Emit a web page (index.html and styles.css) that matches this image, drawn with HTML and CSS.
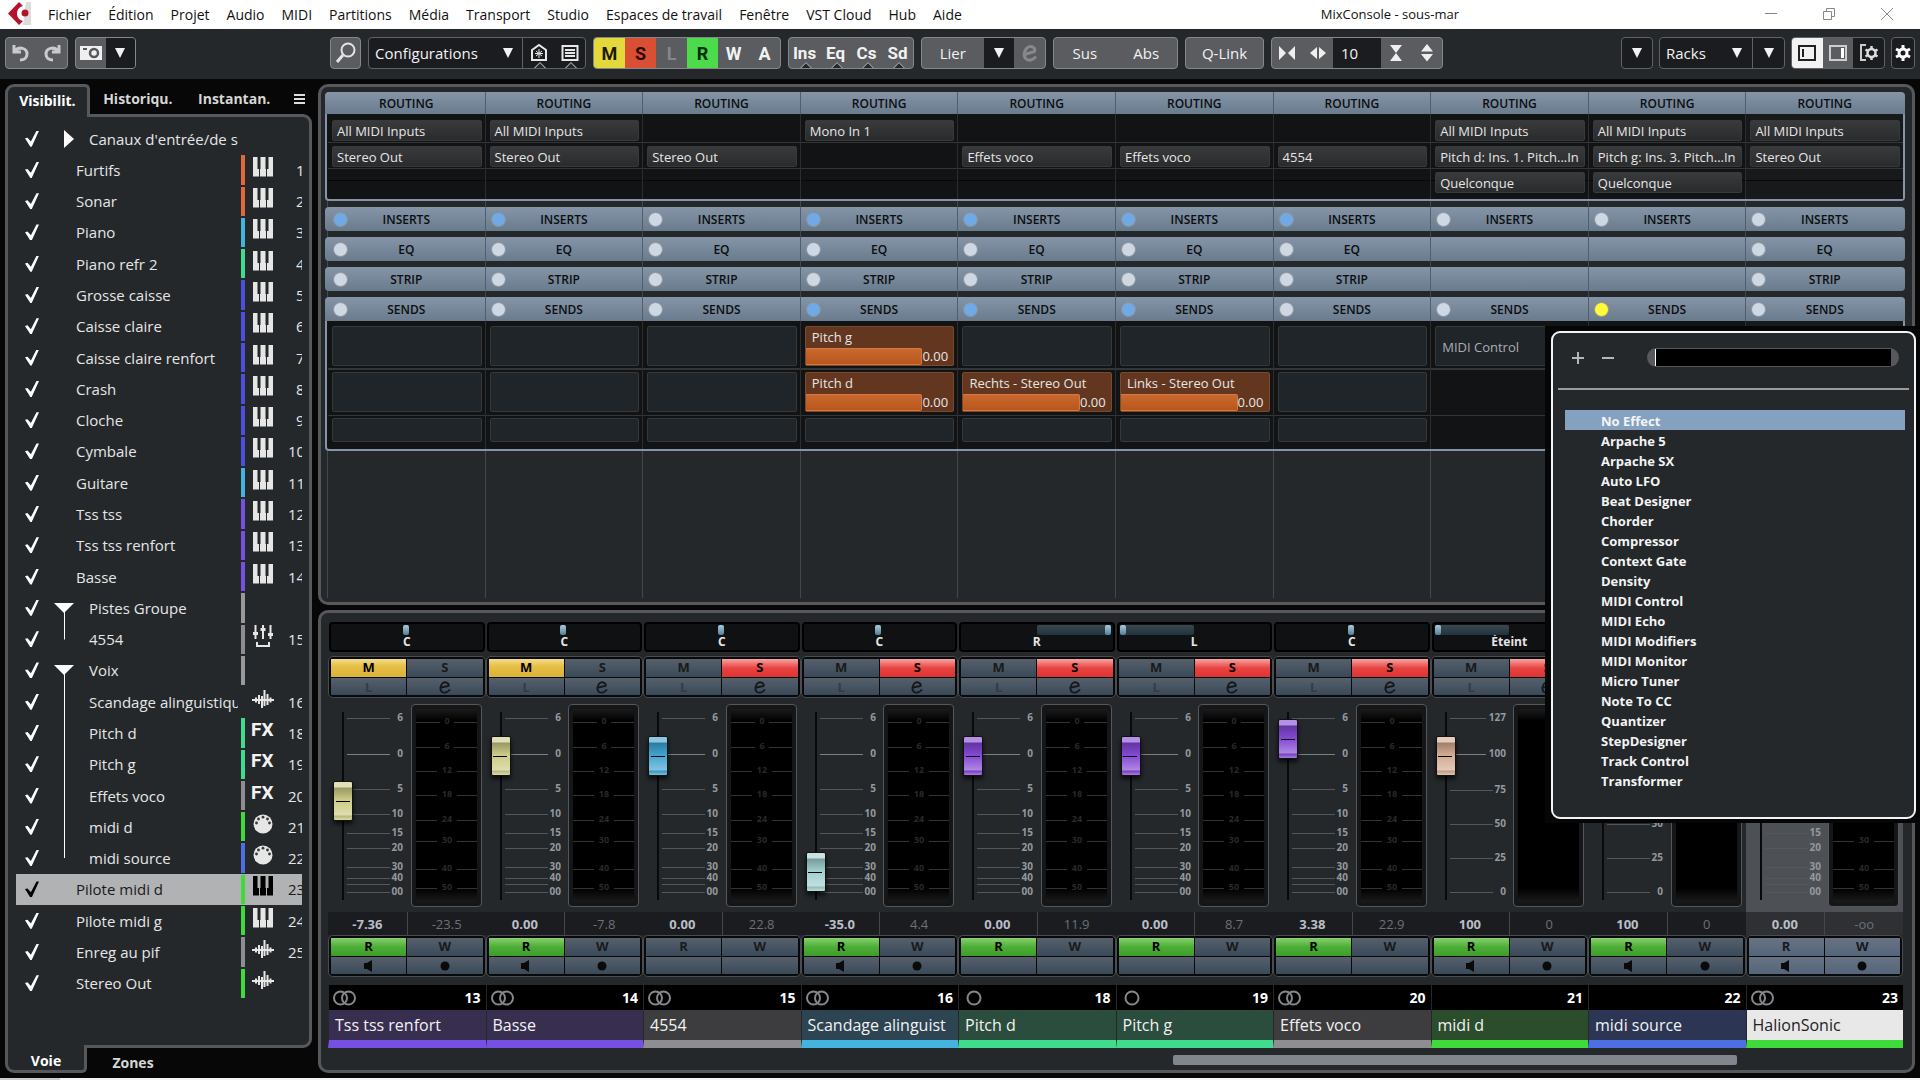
FILE: index.html
```html
<!DOCTYPE html>
<html lang="fr">
  <head>
    <meta charset="UTF-8" />
    <meta name="viewport" content="width=device-width, initial-scale=1.0" />
    <title>MixConsole - sous-mar</title>
    <link rel="stylesheet" href="styles.css">
  </head>
  <body>
    <header class="menubar">
      <svg class="logo" width="24" height="24" viewBox="0 0 24 24">
        <path d="M18 0h5v23h-8z" fill="#dcdcdc" />
        <path d="M0 11.5 11 0l4 4c-4 1-6 4-6 7.500s2 6.500 6 7.500l-4 4z" fill="#b3142a" />
        <circle cx="17" cy="11" r="3.500" fill="#b3142a" />
      </svg>
      <nav class="menu">
        <a href="#">Fichier</a>
        <a href="#">Édition</a>
        <a href="#">Projet</a>
        <a href="#">Audio</a>
        <a href="#">MIDI</a>
        <a href="#">Partitions</a>
        <a href="#">Média</a>
        <a href="#">Transport</a>
        <a href="#">Studio</a>
        <a href="#">Espaces de travail</a>
        <a href="#">Fenêtre</a>
        <a href="#">VST Cloud</a>
        <a href="#">Hub</a>
        <a href="#">Aide</a>
      </nav>
      <div class="window-title">MixConsole - sous-mar</div>
      <div class="window-buttons">
        <button aria-label="Réduire"><svg width="14" height="14"><path d="M1 6.500h12" /></svg></button>
        <button aria-label="Restaurer"><svg width="14" height="14"><path d="M1.500 4.500h8v8h-8zM4.500 4V1.500h8v8H10" /></svg></button>
        <button aria-label="Fermer"><svg width="14" height="14"><path d="M1 1l12 12M13 1 1 13" /></svg></button>
      </div>
    </header>

    <div class="toolbar">
      <div class="group undo">
        <button aria-label="Annuler"><svg width="20" height="20" viewBox="0 0 20 20"><path d="M3 2v7h7M4 8c4-5 12-3 12 3 0 4-3 6-7 6" fill="none" stroke="#c9cacc" stroke-width="3" /></svg></button>
        <button aria-label="Rétablir"><svg width="20" height="20" viewBox="0 0 20 20"><path d="M17 2v7h-7M16 8C12 3 4 5 4 11c0 4 3 6 7 6" fill="none" stroke="#c9cacc" stroke-width="3" /></svg></button>
      </div>
      <div class="group camera">
        <button aria-label="Instantané"><svg width="22" height="16" viewBox="0 0 22 16"><path d="M0 1h22v14H0z" fill="#efefef" /><circle cx="14" cy="8" r="4" fill="none" stroke="#55575a" stroke-width="2.500" /><path d="M3 4h4" stroke="#55575a" stroke-width="2" /></svg></button>
        <button class="dark" aria-label="Liste"><svg class="arrow" width="10" height="10"><path d="M0 0h10L5 10z" /></svg></button>
      </div>
      <button class="group search" aria-label="Rechercher"><svg width="24" height="24" viewBox="0 0 24 24"><circle cx="14" cy="9" r="6.500" fill="none" stroke="#e4e4e4" stroke-width="2" /><path d="M9 14l-6 7" stroke="#e4e4e4" stroke-width="3" /></svg></button>
      <div class="group dark config">
        <select aria-label="Configurations"><option>Configurations</option></select>
        <svg class="arrow" width="10" height="10"><path d="M0 0h10L5 10z" /></svg>
        <button class="notched first" aria-label="Zones"><svg width="18" height="18" viewBox="0 0 18 18"><path d="M2 6l7-5 7 5v10H2z" fill="none" stroke="#e8e8e8" stroke-width="2" /><path d="M9 5v9M5 9.500h8M6 7l6 5M12 7l-6 5" stroke="#e8e8e8" /></svg></button>
        <button class="notched" aria-label="Liste des voies"><svg width="18" height="18" viewBox="0 0 18 18"><path d="M1.500 2h15v14h-15z" fill="none" stroke="#e8e8e8" stroke-width="2" /><path d="M4 6h10M4 9h10M4 12h10" stroke="#e8e8e8" stroke-width="2" /></svg></button>
      </div>
      <div class="group modes">
        <button class="yellow">M</button>
        <button class="red">S</button>
        <button class="off">L</button>
        <button class="green">R</button>
        <button>W</button>
        <button>A</button>
      </div>
      <div class="group racks-toggle">
        <button class="notched">Ins</button>
        <button class="notched">Eq</button>
        <button class="notched">Cs</button>
        <button class="notched">Sd</button>
      </div>
      <div class="group link">
        <button class="wide">Lier</button>
        <button class="dark" aria-label="Options"><svg class="arrow" width="10" height="10"><path d="M0 0h10L5 10z" /></svg></button>
        <button aria-label="Modifier"><svg width="20" height="20" viewBox="0 0 20 20"><path d="M4.500 11.500l10-3c1.500-4-3-6-6-4.500-4 2-5.500 8-3 11.500 3 3 8 1.500 10.500-2" fill="none" stroke="#86888b" stroke-width="3" /></svg></button>
      </div>
      <div class="group pair">
        <button>Sus</button>
        <button>Abs</button>
      </div>
      <button class="group qlink">Q-Link</button>
      <div class="group zoom">
        <button aria-label="Rétrécir"><svg width="16" height="14"><path d="M0 0l7 7-7 7zM16 0 9 7l7 7z" fill="#efefef" /></svg></button>
        <button aria-label="Élargir"><svg width="16" height="14"><path d="M7 1v12L0 7zM9 1v12l7-6z" fill="#efefef" /></svg></button>
        <input type="text" value="10" aria-label="Nombre de voies" />
        <button aria-label="Réduire la hauteur"><svg width="12" height="18"><path d="M0 1h12L6 9l6 8H0l6-8z" fill="#efefef" /></svg></button>
        <button aria-label="Augmenter la hauteur"><svg width="12" height="18"><path d="M0 7.500 6 0l6 7.500zM0 10h12l-6 7.500z" fill="#efefef" /></svg></button>
      </div>
      <div class="toolbar-right">
        <button class="group dark menu-button" aria-label="Menu"><svg class="arrow" width="10" height="10"><path d="M0 0h10L5 10z" /></svg></button>
        <div class="group dark racks">
          <select aria-label="Racks"><option>Racks</option></select>
          <svg class="arrow" width="10" height="10"><path d="M0 0h10L5 10z" /></svg>
          <button class="first" aria-label="Menu des racks"><svg class="arrow" width="10" height="10"><path d="M0 0h10L5 10z" /></svg></button>
        </div>
        <div class="group dark layout">
          <button class="layout-on" aria-label="Zone gauche"><svg width="18" height="16"><path d="M1 1h16v14H1z" fill="none" stroke="#222" stroke-width="2" /><path d="M4 4h2v8H4z" fill="#222" /></svg></button>
          <button class="layout-off" aria-label="Zone droite"><svg width="18" height="16"><path d="M1 1h16v14H1z" fill="none" stroke="#ccc" stroke-width="2" /><path d="M12 3h3v10h-3z" fill="#fff" /></svg></button>
          <button aria-label="Réglages de la fenêtre"><svg width="20" height="18" viewBox="0 0 20 18"><path d="M7 1H2v15h5" fill="none" stroke="#ccc" stroke-width="2" /><circle cx="12.500" cy="9" r="4" fill="none" stroke="#ddd" stroke-width="2.500" /><path d="M12.500 2v3M12.500 13v3M6.500 5.500l2.500 1.500M16 11l2.500 1.500M6.500 12.500 9 11M16 7l2.500-1.500" stroke="#ddd" stroke-width="2.500" /></svg></button>
        </div>
        <button class="group dark gear" aria-label="Configuration"><svg width="18" height="18" viewBox="0 0 18 18"><circle cx="9" cy="9" r="4" fill="none" stroke="#fff" stroke-width="3" /><path d="M9 1v3M9 14v3M2 5l3 1.500M13 11.500l3 1.500M2 13l3-1.500M13 6.500 16 5" stroke="#fff" stroke-width="3" /></svg></button>
      </div>
    </div>

    <main class="workspace">
      <aside class="sidebar">
        <div class="tabs">
          <button class="tab active">Visibilit.</button>
          <button class="tab">Historiqu.</button>
          <button class="tab">Instantan.</button>
          <button class="tab-menu" aria-label="Onglets"><svg width="12" height="12"><path d="M0 2h11M0 6h11M0 10h11" stroke="#ddd" stroke-width="2" /></svg></button>
        </div>
        <div class="sidebar-body">
          <ul class="tracks"></ul>
        </div>
        <div class="tabs bottom">
          <button class="tab active">Voie</button>
          <button class="tab">Zones</button>
        </div>
      </aside>

      <div class="console">
        <section class="panel rack-panel">
          <div class="racks-area"></div>
        </section>
        <section class="panel fader-panel">
          <div class="channels"></div>
          <div class="scrollbar"><div class="scroll-thumb"></div></div>
        </section>
      </div>
    </main>
    <footer class="taskbar-edge"></footer>

    <div class="popup-frame">
      <div class="popup">
        <div class="popup-head">
          <button aria-label="Déplier"><svg width="12" height="12"><path d="M6 0v12M0 6h12" /></svg></button>
          <button aria-label="Replier"><svg width="12" height="12"><path d="M0 6h12" /></svg></button>
          <div class="popup-search"><input type="text" aria-label="Rechercher un effet" /></div>
        </div>
        <ul class="effects">
          <li class="selected">No Effect</li>
          <li>Arpache 5</li>
          <li>Arpache SX</li>
          <li>Auto LFO</li>
          <li>Beat Designer</li>
          <li>Chorder</li>
          <li>Compressor</li>
          <li>Context Gate</li>
          <li>Density</li>
          <li>MIDI Control</li>
          <li>MIDI Echo</li>
          <li>MIDI Modifiers</li>
          <li>MIDI Monitor</li>
          <li>Micro Tuner</li>
          <li>Note To CC</li>
          <li>Quantizer</li>
          <li>StepDesigner</li>
          <li>Track Control</li>
          <li>Transformer</li>
        </ul>
      </div>
    </div>

    <script src="script.js"></script>
  </body>
</html>
```
FILE: styles.css
```css
* {
  box-sizing: border-box;
}

body {
  margin: 0;
  height: 100vh;
  display: flex;
  flex-direction: column;
  overflow: hidden;
  background: #070707;
  color: #e6e6e6;
  font-family: "Open Sans", "Noto Sans", sans-serif;
  font-size: 14px;
}

button,
input,
select {
  font: inherit;
  color: inherit;
  background: none;
  border: none;
  outline: none;
  margin: 0;
  padding: 0;
}

button {
  display: flex;
  align-items: center;
  justify-content: center;
}

ul {
  list-style: none;
  margin: 0;
  padding: 0;
}

svg {
  flex: none;
  display: block;
}

/* menu bar */
.menubar {
  display: flex;
  align-items: center;
  height: 29px;
  padding: 0 4px 1px 8px;
  background: #fff;
  color: #111;
}

.menu {
  display: flex;
  gap: 17px;
  margin-left: 16px;
}

.menu a {
  color: inherit;
  text-decoration: none;
}

.window-title {
  flex: 1;
  padding-left: 76px;
  text-align: center;
  font-size: 13px;
}

.window-buttons {
  display: flex;
}

.window-buttons button {
  width: 58px;
  height: 28px;
}

.window-buttons path {
  fill: none;
  stroke: #888;
}

/* toolbar */
.toolbar {
  display: flex;
  align-items: center;
  gap: 7px;
  height: 50px;
  padding: 0 5px 2px;
  background: #24282b;
  font-size: 15px;
  color: #f2f2f2;
}

.toolbar-right {
  display: flex;
  gap: 6px;
  margin-left: auto;
}

.group {
  display: flex;
  height: 32px;
  border: 1px solid #85878a;
  border-radius: 4px;
  background: #5a5c60;
  overflow: hidden;
}

.group button {
  flex: 1;
}

.dark {
  background: #1b1c20;
}

.group.dark {
  border-color: #606266;
}

.arrow path {
  fill: #f2f2f2;
}

.undo {
  width: 63px;
}

.camera {
  width: 61px;
}

.search {
  width: 31px;
  margin-left: 187px;
}

.config {
  width: 218px;
  align-items: center;
}

.config select,
.racks select {
  appearance: none;
  width: 134px;
  height: 30px;
  padding-left: 6px;
}

.config .first,
.racks .first {
  height: 30px;
  border-left: 1px solid #606266;
}

.config .first {
  margin-left: 9px;
}

.notched {
  position: relative;
  height: 30px;
}

.notched::after {
  content: "";
  position: absolute;
  bottom: -6px;
  left: calc(50% - 4px);
  width: 8px;
  height: 8px;
  border: 1px solid #aaa;
  background: #24282b;
  transform: rotate(45deg);
}

.modes {
  width: 188px;
  font-family: Roboto, sans-serif;
  font-weight: 700;
  font-size: 18px;
}

.modes .yellow {
  background: #e4d93a;
  color: #1c1a00;
}

.modes .red {
  background: #d94f33;
  color: #2b0600;
}

.modes .green {
  background: #4bdb4b;
  color: #062b06;
}

.modes .off {
  color: #85878a;
}

.racks-toggle {
  width: 126px;
  font-family: Roboto, sans-serif;
  font-weight: 700;
  font-size: 17px;
}

.link {
  width: 125px;
}

.group .wide {
  flex: 2;
}

.pair {
  width: 125px;
}

.qlink {
  width: 79px;
}

.zoom {
  width: 172px;
}

.zoom input {
  width: 48px;
  padding-left: 8px;
  background: #1b1c20;
}

.menu-button {
  width: 32px;
}

.racks {
  width: 126px;
  align-items: center;
}

.racks select {
  width: 72px;
}

.racks .first {
  margin-left: 10px;
}

.layout {
  width: 94px;
}

.layout-on {
  background: #f2f2f2;
}

.layout-off {
  background: #5a5c60;
}

.gear {
  width: 24px;
}

/* left column */
.workspace {
  flex: 1;
  min-height: 0;
  display: flex;
  gap: 6px;
  padding: 5px;
}

.sidebar {
  width: 307px;
  display: flex;
  flex-direction: column;
}

.tabs {
  display: flex;
  height: 30px;
  font-weight: 700;
  color: #d6d6d6;
}

.tab {
  width: 98px;
  padding-bottom: 2px;
}

.tab.active {
  position: relative;
  width: 86px;
  margin-bottom: -3px;
  padding-bottom: 4px;
  border: 3px solid #56585c;
  border-bottom: none;
  border-radius: 9px 5px 0 0;
  background: #24282b;
  color: #fff;
}

.tab-menu {
  width: 24px;
  margin-left: 6px;
}

.sidebar-body {
  flex: 1;
  min-height: 0;
  display: flex;
  flex-direction: column;
  padding: 6px 7px 46px 8px;
  border: 3px solid #56585c;
  border-radius: 0 9px 9px 0;
  background: #24282b;
}

.tabs.bottom {
  height: 25px;
}

.bottom .tab {
  width: 92px;
  padding: 3px 0 0;
}

.bottom .tab.active {
  width: 82px;
  margin: -3px 0 0;
  padding: 6px 0 0;
  border: 3px solid #56585c;
  border-top: none;
  border-radius: 0 0 5px 9px;
}

.tracks {
  flex: 1;
  display: flex;
  flex-direction: column;
}

.track {
  flex: 1;
  display: flex;
  align-items: center;
  min-height: 0;
  overflow: hidden;
  font-size: 15px;
}

.track.selected {
  background: #b1b2b4;
  color: #1a1a1a;
}

.track input {
  appearance: none;
  flex: none;
  width: 14px;
  height: 16px;
  margin: 0 13px 0 9px;
}

.track input:checked {
  background: #fff;
  clip-path: polygon(0 48%, 18% 44%, 42% 68%, 82% 0, 100% 0, 48% 100%, 38% 100%);
}

.track.selected input:checked,
.track.selected .kind {
  color: #000;
}

.track.selected input:checked {
  background: #000;
}

.tree {
  flex: none;
  align-self: stretch;
  display: flex;
  align-items: center;
  justify-content: center;
  width: 24px;
  background: linear-gradient(#fff, #fff) no-repeat center top / 0 0;
}

.tree.closed {
  justify-content: flex-end;
  padding-right: 2px;
}

.tree.open {
  background-position: center bottom;
  background-size: 1px 50%;
}

.tree.mid {
  background-size: 1px 100%;
}

.tree.last {
  background-size: 1px 50%;
}

.tree path {
  fill: #fff;
}

.track label {
  flex: 1;
  min-width: 0;
  overflow: hidden;
  white-space: nowrap;
}

.track.child label {
  padding-left: 13px;
}

.stripe {
  align-self: stretch;
  width: 4px;
  margin: 1px 8px 1px 3px;
}

.kind {
  flex: none;
  margin-bottom: 6px;
}

.fx {
  width: 22px;
  margin-left: -2px;
  font-family: Roboto, sans-serif;
  font-weight: 700;
  font-size: 19px;
  line-height: 20px;
  color: #f2f2f2;
}

.kind.waveform {
  margin-left: -1px;
  margin-right: -1px;
}

.track-number {
  width: 29px;
  padding-left: 15px;
  overflow: hidden;
}

.track-number.one {
  padding-left: 23px;
}

/* right column */
.console {
  flex: 1;
  min-width: 0;
  display: flex;
  flex-direction: column;
  gap: 5px;
}

.panel {
  border: 3px solid #56585c;
  border-radius: 10px;
  background: #24282b;
}

.rack-panel {
  flex: 1;
  min-height: 0;
  padding: 5px 7px 4px 4px;
}

.racks-area {
  height: 100%;
  background: repeating-linear-gradient(to right, #44484b 0, #44484b 1px, transparent 1px, transparent 10%) content-box;
  padding: 0 2px;
}

.rack {
  margin: 0 -2px 6px;
}

.rack-head {
  display: grid;
  grid-template-columns: repeat(10, 1fr);
  height: 24px;
  padding: 0 2px;
  border-radius: 4px;
  background: linear-gradient(#8595a7, #697b8d);
  color: #0b0d10;
  font-size: 12px;
  font-weight: 600;
}

.rack.open .rack-head {
  border-radius: 4px 4px 0 0;
}

.routing .rack-head {
  height: 22px;
}

.rack-head div {
  display: flex;
  align-items: center;
  justify-content: center;
  border-left: 1px solid #4f5f6e;
}

.rack-head div:first-child,
.rack-body div.rack-cell:first-child {
  border-left-color: transparent;
}

.rack-head button {
  width: 15px;
  height: 15px;
  margin: 0 auto 0 5px;
  border: 1px solid #8f9295;
  border-radius: 50%;
  background: #cdd8e4;
}

.rack-head span {
  flex: 1;
  text-align: center;
}

.rack-head button + span {
  margin-right: 20px;
}

.rack-head .blue {
  background: #6fa9e6;
}

.rack-head .yellow {
  background: #fffb38;
}

.rack-body {
  display: grid;
  grid-template-columns: repeat(10, 1fr);
  border: 2px solid #8595a7;
  border-top: none;
  border-radius: 0 0 4px 4px;
  background: #121315;
}

.rack-cell {
  min-width: 0;
  display: flex;
  flex-direction: column;
  padding: 6px 3px 6px 4px;
  gap: 5px;
  border-left: 1px solid #2b2d2f;
}

.rack-cell:last-child {
  background: #18191b;
}

.routing .rack-cell {
  background-image: linear-gradient(#333537, #333537), linear-gradient(#333537, #333537), linear-gradient(#060606, #060606);
  background-position: 0 28px, 0 54px, 0 66px;
  background-size: 100% 1px;
  background-repeat: no-repeat;
}

.route {
  justify-content: flex-start;
  height: 21px;
  padding-left: 4px;
  border: 1px solid #37393b;
  border-radius: 2px;
  background: linear-gradient(#393a3c, #2a2b2d);
  font-size: 13px;
  white-space: nowrap;
  overflow: hidden;
}

.route.empty {
  visibility: hidden;
}

.sends .rack-cell {
  height: 128px;
  padding: 5px 3px 5px 4px;
  gap: 6px;
  background-image: linear-gradient(#333537, #333537), linear-gradient(#333537, #333537);
  background-position: 0 47px, 0 94px;
  background-size: 100% 2px, 100% 1px;
  background-repeat: no-repeat;
}

.slot {
  flex: none;
  height: 40px;
  border: 1px solid #34393d;
  border-radius: 2px;
  background: #202529;
  font-size: 13px;
  line-height: 21px;
  padding: 0 6px;
  white-space: nowrap;
}

.slot.small {
  height: 24px;
}

.slot.midi-slot {
  line-height: 40px;
  color: #a9aeb3;
}

.slot.filled {
  padding: 0;
  border-color: #7a4a2c;
  background: #63371f;
}

.slot-name {
  padding-left: 6px;
}

.slot-level {
  display: flex;
  height: 17px;
  line-height: 17px;
}

.slot-bar {
  width: 79%;
  border: 1px solid #d7793f;
  border-left: none;
  border-radius: 0 2px 2px 0;
  background: linear-gradient(#c9692f, #b9561b);
}

/* faders */
.fader-panel {
  padding: 9px 9px 5px 7px;
}

.channels {
  display: grid;
  grid-template-columns: repeat(10, 1fr);
}

.channel {
  min-width: 0;
  --off: linear-gradient(#56606b, #3a4959);
}

.strip {
  margin-top: -9px;
  padding-top: 9px;
}

.channel.selected .strip {
  background: #4d5156;
}

.channel.selected {
  --off: linear-gradient(#687382, #54657a);
}

.pan {
  position: relative;
  height: 30px;
  margin: 0 1px 4px;
  border: 2px solid #000;
  border-radius: 4px;
  background: #101113;
  text-align: center;
  font-weight: 700;
  font-size: 12px;
  line-height: 14px;
  padding-top: 11px;
}

.pan-track {
  position: absolute;
  top: 1px;
  left: 50%;
  height: 10px;
  width: 6px;
  margin-left: -4px;
  border-radius: 2px;
  display: flex;
}

.pan-track::after {
  content: "";
  width: 6px;
  border-radius: 2px;
  background: linear-gradient(#a9cbdc, #547f98);
}

.pan-track.right,
.pan-track.left {
  width: 49%;
  margin: 0;
  background: linear-gradient(#3c474e, #20343f);
}

.pan-track.right {
  justify-content: flex-end;
}

.pan-track.left {
  left: 1px;
}

.buttons {
  display: grid;
  grid-template-columns: 1fr 1fr;
  grid-template-rows: repeat(2, minmax(0, 1fr));
  gap: 1px;
  height: 42px;
  padding: 2px;
  border: 1px solid #4a4c4f;
  border-radius: 5px;
  background: #08090a;
}

.buttons button {
  min-height: 0;
  background: var(--off);
  color: #191a18;
  font-weight: 700;
  font-size: 13px;
  line-height: 16px;
}

.buttons button:nth-child(-n + 2) {
  padding-bottom: 2px;
}

.buttons button:nth-child(n + 3) {
  padding-top: 2px;
}

.buttons .faint {
  color: #363b42;
}

.buttons .mute {
  background: linear-gradient(#f3dc93, #e6bf45 40%, #dcb238);
  color: #000;
}

.buttons .solo {
  background: linear-gradient(#f5a5a3, #e84442 50%, #dd3432);
  color: #000;
}

.buttons .read {
  background: linear-gradient(#8ad06f, #4bae36 50%, #3f9d2b);
  color: #000;
}

.fader-row {
  position: relative;
  display: flex;
  height: 214px;
  padding-top: 6px;
}

.scale {
  flex: 1;
}

.scale text,
.meter text {
  font-family: "Open Sans", sans-serif;
  font-weight: 700;
  font-size: 10px;
}

.scale text {
  fill: #94999e;
  text-anchor: end;
}

.scale path {
  stroke: #54585b;
}

.scale .zero {
  stroke: #7c8084;
}

.meter {
  width: 71px;
  height: 203px;
  margin-right: 4px;
  padding: 4px;
  border: 1px solid #55575a;
  border-radius: 4px;
  background: #151617;
}

.meter svg {
  background: linear-gradient(#1b1b1b, #000 12px, #000 179px, #1b1b1b);
}

.meter text {
  fill: #2a2a2a;
  font-size: 9px;
  text-anchor: middle;
}

.meter path {
  stroke: #333;
}

.fader {
  position: absolute;
  left: 4px;
  top: 6px;
  width: 22px;
  height: 200px;
  appearance: none;
  writing-mode: vertical-lr;
  direction: rtl;
}

.fader::-webkit-slider-thumb {
  appearance: none;
  width: 20px;
  height: 40px;
  border-radius: 2px;
  border: 1px solid #111;
  background: linear-gradient(transparent 19px, #000 19px, #000 20px, transparent 20px) center / 80% 100% no-repeat,
    linear-gradient(rgba(255, 255, 255, 0.4) 5px, rgba(0, 0, 0, 0.25) 6px, transparent 18px, rgba(255, 255, 255, 0.35) 33px, rgba(0, 0, 0, 0.1) 34px, rgba(255, 255, 255, 0.3) 38px) currentColor;
  box-shadow: 0 3px 4px rgba(0, 0, 0, 0.7);
}

.values {
  display: grid;
  grid-template-columns: 1fr 1fr;
  height: 23px;
  line-height: 24px;
  text-align: center;
  background: #1b1c20;
  font-size: 13px;
}

.channel.selected .values {
  background: #2e3034;
}

.values b {
  color: #b9bfc6;
  font-weight: 700;
}

.values span {
  color: #6b7178;
  border-left: 1px solid #44474a;
}

.number {
  display: flex;
  align-items: center;
  justify-content: space-between;
  height: 25px;
  margin-top: 8px;
  padding: 0 5px 0 4px;
  background: #000;
  color: #fff;
  font-weight: 700;
  font-size: 14px;
  border-left: 1px solid #24282b;
}

.number circle {
  fill: none;
  stroke: #85878a;
  stroke-width: 2;
}

.name {
  height: 38px;
  padding-left: 6px;
  border-bottom: 8px solid;
  border-left: 1px solid #24282b;
  line-height: 30px;
  font-size: 16px;
  white-space: nowrap;
  overflow: hidden;
}

.name span {
  color: #f2f2f2;
}

.channel.selected .name span {
  color: #222;
}

/* channel colours */
.purple { color: #7550e2; background: #382e50; }
.gray { color: #8e8e92; background: #3d3d3f; }
.sky { color: #44b3de; background: #2d4452; }
.teal { color: #3fdc8e; background: #2b4d3d; }
.lime { color: #3edb3a; background: #2b4d2c; }
.indigo { color: #4d6fe2; background: #2c3554; }
.white-name { color: #3edb3a; background: #e8e8e8; }

.scrollbar {
  display: flex;
  justify-content: flex-end;
  margin-top: 7px;
  padding-right: 166px;
}

.scroll-thumb {
  width: 40%;
  height: 10px;
  border-radius: 2px;
  background: #80868c;
}

.taskbar-edge {
  height: 2px;
  background: linear-gradient(to right, #ccc 60px, #f4f4f4 60px);
}

/* effect list */
.popup-frame {
  position: absolute;
  top: 326px;
  right: 0;
  width: 375px;
  padding: 5px 4px 4px 6px;
  background: #050607;
}

.popup {
  border: 2px solid #f4f4f4;
  border-radius: 9px;
  background: #24282b;
  padding: 0 5px 27px;
}

.popup-head {
  display: flex;
  align-items: center;
  height: 57px;
  padding: 0 10px 6px 14px;
  border-bottom: 2px solid #9a9b9d;
}

.popup-head button {
  width: 12px;
  margin-right: 18px;
}

.popup-head path {
  stroke: #b5b6b8;
  stroke-width: 2;
}

.popup-search {
  flex: 1;
  height: 19px;
  margin-left: 15px;
  padding: 1px 8px;
  border-radius: 10px;
  background: #56585b;
}

.popup-search input {
  width: 100%;
  height: 17px;
  border-left: 1px solid #fff;
  background: #000;
  display: block;
}

.effects {
  padding: 20px 4px 0 7px;
  color: #f4f4f4;
  font-weight: 700;
  font-size: 13px;
}

.effects li {
  height: 20px;
  line-height: 22px;
  padding-left: 36px;
}

.effects .selected {
  background: #84a1c0;
}
```
FILE: script.js
```js
const trackList = document.querySelector(".tracks");
const racksArea = document.querySelector(".racks-area");
const channelList = document.querySelector(".channels");

const ICONS = {
  keys: `<svg class="kind" width="20" height="20" viewBox="0 0 20 20"><path d="M0 0h4.500v12H6v7.500H0zM7.500 0h5v12H13v7.500H7V12h.5zM15.500 0H20v19.500h-6V12h1.500z" fill="currentColor"/></svg>`,
  group: `<svg class="kind" width="20" height="22" viewBox="0 0 20 22"><path d="M2.500 0v14M10 0v14M17.500 0v14M4 17v4h12v-4" fill="none" stroke="currentColor" stroke-width="2"/><path d="M0 7h5v3H0zM7.500 3h5v3h-5zM15 8h5v3h-5z" fill="currentColor"/></svg>`,
  wave: `<svg class="kind waveform" width="22" height="18" viewBox="0 0 22 18"><path d="M0 10h22M4 7.500v5M7 5v9M10 6v12M12.500 0v16M15.500 4v11M18.500 7.500v5" stroke="currentColor" stroke-width="2"/></svg>`,
  fx: `<span class="kind fx">FX</span>`,
  midi: `<svg class="kind" width="20" height="20" viewBox="0 0 20 20"><circle cx="10" cy="10" r="9.500" fill="currentColor"/><g fill="#33373a"><circle cx="3.500" cy="9" r="1.400"/><circle cx="5.500" cy="5" r="1.400"/><circle cx="10" cy="3.200" r="1.400"/><circle cx="14.500" cy="5" r="1.400"/><circle cx="16.500" cy="9" r="1.400"/></g></svg>`,
  none: `<svg class="kind" width="20" height="20"></svg>`,
};

const EDIT = `<svg width="14" height="14" viewBox="0 0 14 14"><path d="M3 7.500l7.500-1.500c1-3-3-4.500-5.500-3-3 2-3.500 7-1 9 2.500 1.500 6 0 8-2.500" fill="none" stroke="#16191c" stroke-width="2"/></svg>`;
const SPEAKER = `<svg width="10" height="12"><path d="M0 3h3l5-3v12L3 9H0z" fill="#0a0a0a"/></svg>`;
const RECORD = `<svg width="10" height="10"><circle cx="5" cy="5" r="4.500" fill="#0a0a0a"/></svg>`;

// name, colour, icon, number, tree
const TRACKS = [
  ["Canaux d'entrée/de sortie", "", "none", "", "closed"],
  ["Furtifs", "#e2683c", "keys", "1"],
  ["Sonar", "#e2683c", "keys", "2"],
  ["Piano", "#44b3de", "keys", "3"],
  ["Piano refr 2", "#3fdc8e", "keys", "4"],
  ["Grosse caisse", "#4d4fe0", "keys", "5"],
  ["Caisse claire", "#4d4fe0", "keys", "6"],
  ["Caisse claire renfort", "#4d4fe0", "keys", "7"],
  ["Crash", "#4d4fe0", "keys", "8"],
  ["Cloche", "#4d4fe0", "keys", "9"],
  ["Cymbale", "#4d4fe0", "keys", "10"],
  ["Guitare", "#44b3de", "keys", "11"],
  ["Tss tss", "#7550e2", "keys", "12"],
  ["Tss tss renfort", "#7550e2", "keys", "13"],
  ["Basse", "#7550e2", "keys", "14"],
  ["Pistes Groupe", "#999", "none", "", "open"],
  ["4554", "#8e8e92", "group", "15", "last"],
  ["Voix", "#999", "none", "", "open"],
  ["Scandage alinguistique", "", "wave", "16", "mid"],
  ["Pitch d", "#3fdc8e", "fx", "18", "mid"],
  ["Pitch g", "#3fdc8e", "fx", "19", "mid"],
  ["Effets voco", "#8e8e92", "fx", "20", "mid"],
  ["midi d", "#3edb3a", "midi", "21", "mid"],
  ["midi source", "#4d6fe2", "midi", "22", "last"],
  ["Pilote midi d", "#3edb3a", "keys", "23"],
  ["Pilote midi g", "#3edb3a", "keys", "24"],
  ["Enreg au pif", "#8e8e92", "wave", "25"],
  ["Stereo Out", "#3edb3a", "wave", ""],
];

const CHANNELS = [
  { name: "Tss tss renfort", number: 13, color: "purple", routes: ["All MIDI Inputs", "Stereo Out"], dots: ["blue", "", "", ""], sends: [], pan: "C", mute: true, read: true, rec: true, level: "-7.36", peak: "-23.5", cap: "#cccb86", pos: 83, rings: 2 },
  { name: "Basse", number: 14, color: "purple", routes: ["All MIDI Inputs", "Stereo Out"], dots: ["blue", "", "", ""], sends: [], pan: "C", mute: true, read: true, rec: true, level: "0.00", peak: "-7.8", cap: "#cccb86", pos: 128, rings: 2 },
  { name: "4554", number: 15, color: "gray", routes: ["", "Stereo Out"], dots: ["", "", "", ""], sends: [], pan: "C", solo: true, level: "0.00", peak: "22.8", cap: "#3fa4d2", pos: 128, rings: 2 },
  { name: "Scandage alinguist", number: 16, color: "sky", routes: ["Mono In 1"], dots: ["blue", "", "", "blue"], sends: ["Pitch g", "Pitch d"], pan: "C", solo: true, read: true, rec: true, level: "-35.0", peak: "4.4", cap: "#a0cfcd", pos: 12, rings: 2 },
  { name: "Pitch d", number: 18, color: "teal", routes: ["", "Effets voco"], dots: ["blue", "", "", "blue"], sends: ["", "Rechts - Stereo Out"], pan: "R", solo: true, read: true, level: "0.00", peak: "11.9", cap: "#8347d3", pos: 128, rings: 1 },
  { name: "Pitch g", number: 19, color: "teal", routes: ["", "Effets voco"], dots: ["blue", "", "", "blue"], sends: ["", "Links - Stereo Out"], pan: "L", solo: true, read: true, level: "0.00", peak: "8.7", cap: "#8347d3", pos: 128, rings: 1 },
  { name: "Effets voco", number: 20, color: "gray", routes: ["", "4554"], dots: ["blue", "", "", ""], sends: [], pan: "C", solo: true, read: true, level: "3.38", peak: "22.9", cap: "#8347d3", pos: 145, rings: 2 },
  { name: "midi d", number: 21, color: "lime", midi: true, routes: ["All MIDI Inputs", "Pitch d: Ins. 1. Pitch...In", "Quelconque"], dots: ["", null, null, ""], sends: ["MIDI Control"], pan: "Éteint", solo: true, read: true, rec: true, level: "100", peak: "0", cap: "#d3ab92", pos: 128, rings: 0 },
  { name: "midi source", number: 22, color: "indigo", midi: true, routes: ["All MIDI Inputs", "Pitch g: Ins. 3. Pitch...In", "Quelconque"], dots: ["", null, null, "yellow"], sends: [""], pan: "Éteint", solo: true, read: true, rec: true, level: "100", peak: "0", cap: "#d3ab92", pos: 128, rings: 0 },
  { name: "HalionSonic", number: 23, color: "white-name", selected: true, routes: ["All MIDI Inputs", "Stereo Out"], dots: ["", "", "", ""], sends: [], pan: "C", rec: true, level: "0.00", peak: "-oo", cap: "#cccb86", pos: 128, rings: 2 },
];

const AUDIO_SCALE = [["6", 14], ["0", 50], ["5", 85], ["10", 110], ["15", 129], ["20", 144], ["30", 163], ["40", 174], ["", 180], ["00", 188]];
const MIDI_SCALE = [["127", 14], ["100", 50], ["75", 86], ["50", 120], ["25", 154], ["0", 188]];
const METER_SCALE = [["0", 13], ["6", 38], ["12", 62], ["18", 86], ["24", 111], ["30", 132], ["40", 160], ["50", 179]];

trackList.innerHTML = TRACKS.map(renderTrack).join("");
racksArea.innerHTML =
  renderRouting() +
  renderHead("INSERTS", 0) +
  renderHead("EQ", 1) +
  renderHead("STRIP", 2) +
  renderSends();
channelList.innerHTML = CHANNELS.map(renderChannel).join("");

function renderTrack([name, color, icon, number, tree = ""], i) {
  let triangle = "";
  if (tree === "closed") triangle = `<svg width="10" height="20"><path d="M0 1l10 9-10 9z"/></svg>`;
  if (tree === "open") triangle = `<svg width="20" height="10"><path d="M0 0h20L10 10z"/></svg>`;

  return `<li class="track ${tree ? "child" : ""} ${name === "Pilote midi d" ? "selected" : ""}">
    <input type="checkbox" id="track-${i}" checked />
    <span class="tree ${tree}">${triangle}</span>
    <label for="track-${i}">${name}</label>
    <span class="stripe" style="background: ${color || "transparent"}"></span>
    ${ICONS[icon]}
    <span class="track-number ${number.length === 1 ? "one" : ""}">${number}</span>
  </li>`;
}

function headCells(title, index) {
  return CHANNELS.map(({ dots }) => {
    if (index === undefined) return `<div><span>${title}</span></div>`;
    if (dots[index] === null) return `<div></div>`;
    return `<div><button class="${dots[index]}" aria-label="${title}"></button><span>${title}</span></div>`;
  }).join("");
}

function renderHead(title, index) {
  return `<div class="rack"><div class="rack-head">${headCells(title, index)}</div></div>`;
}

function renderRouting() {
  const cells = CHANNELS.map(({ routes }) => {
    const buttons = [0, 1, 2].map(
      (i) => `<button class="route ${routes[i] ? "" : "empty"}">${routes[i] || ""}</button>`
    );
    return `<div class="rack-cell">${buttons.join("")}</div>`;
  });
  return `<div class="rack open routing"><div class="rack-head">${headCells("ROUTING")}</div><div class="rack-body">${cells.join("")}</div></div>`;
}

function renderSends() {
  const cells = CHANNELS.map(({ sends, midi }) => {
    if (midi) return `<div class="rack-cell"><div class="slot midi-slot">${sends[0]}</div></div>`;
    const slots = [0, 1].map((i) =>
      sends[i]
        ? `<div class="slot filled"><div class="slot-name">${sends[i]}</div><div class="slot-level"><div class="slot-bar"></div>0.00</div></div>`
        : `<div class="slot"></div>`
    );
    return `<div class="rack-cell">${slots.join("")}<div class="slot small"></div></div>`;
  });
  return `<div class="rack open sends"><div class="rack-head">${headCells("SENDS", 3)}</div><div class="rack-body">${cells.join("")}</div></div>`;
}

function renderScale(scale) {
  const marks = scale.map(
    ([label, y]) =>
      `<path class="${y === 50 ? "zero" : ""}" d="M19 ${y + 0.5}h${label.length > 2 ? 36 : 43}"/><text x="75" y="${y + 3}">${label}</text>`
  );
  return `<svg class="scale" width="78" height="203"><rect x="14" y="8" width="2" height="188" fill="#08090a"/>${marks.join("")}</svg>`;
}

function renderMeter(midi) {
  const marks = METER_SCALE.map(([label, y]) => {
    const w = label.length > 1 ? 21 : 24;
    return `<path d="M0 ${y + 0.5}h${w}M${62 - w} ${y + 0.5}h${w}"/><text x="31" y="${y + 2}">${label}</text>`;
  });
  return `<div class="meter"><svg width="61" height="193">${midi ? "" : marks.join("")}</svg></div>`;
}

function renderChannel(channel) {
  const { name, number, color, midi, pan, mute, solo, read, rec, level, peak, cap, pos, rings } = channel;
  const side = pan === "R" ? "right" : pan === "C" ? "" : "left";
  let circles = "";
  if (rings === 1) circles = `<circle cx="11" cy="8" r="6.500"/>`;
  if (rings === 2) circles = `<circle cx="7.500" cy="8" r="6.500"/><circle cx="15.500" cy="8" r="6.500"/>`;

  return `<article class="channel ${channel.selected ? "selected" : ""}">
    <div class="strip">
      <div class="pan"><div class="pan-track ${side}"></div>${pan}</div>
      <div class="buttons">
        <button class="${mute ? "mute" : ""}">M</button>
        <button class="${solo ? "solo" : ""}">S</button>
        <button class="faint">L</button>
        <button aria-label="Modifier">${EDIT}</button>
      </div>
      <div class="fader-row">
        ${renderScale(midi ? MIDI_SCALE : AUDIO_SCALE)}
        <input class="fader" type="range" min="0" max="160" value="${pos}" aria-label="Volume ${name}" style="color: ${cap}" />
        ${renderMeter(midi)}
      </div>
      <div class="values"><b>${level}</b><span>${peak}</span></div>
    </div>
    <div class="buttons">
      <button class="${read ? "read" : ""}">R</button>
      <button>W</button>
      <button aria-label="Monitoring">${rec ? SPEAKER : ""}</button>
      <button aria-label="Enregistrement">${rec ? RECORD : ""}</button>
    </div>
    <div class="number"><svg width="24" height="16">${circles}</svg>${number}</div>
    <div class="name ${color}"><span>${name}</span></div>
  </article>`;
}
```
